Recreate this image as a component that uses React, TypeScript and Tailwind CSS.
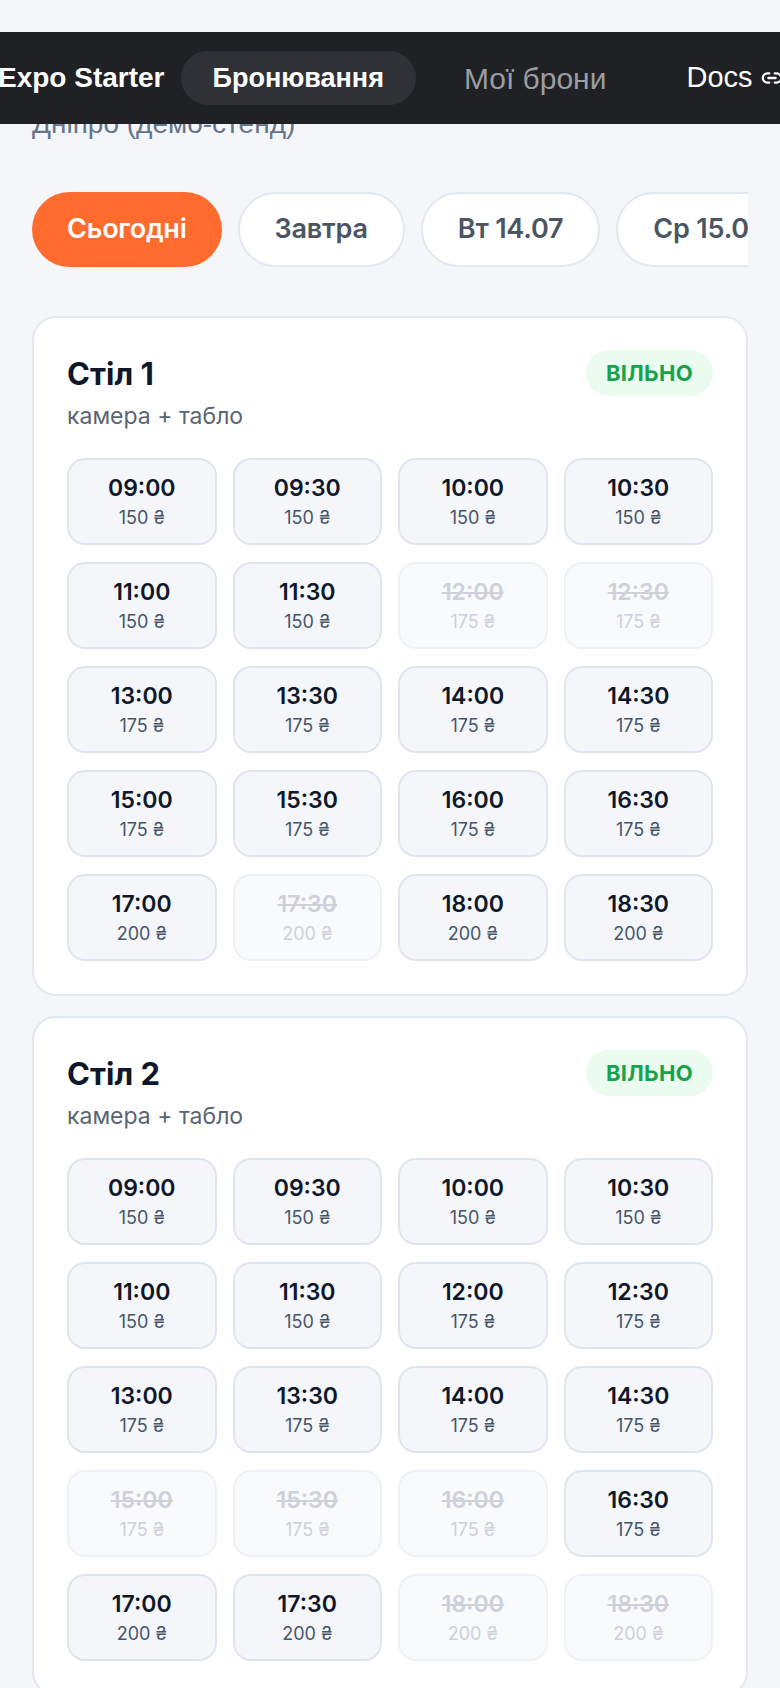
import React from "react";
import { Link2 } from "lucide-react";

type Slot = { t: string; p: number; off?: boolean };

const times = [
  "09:00","09:30","10:00","10:30","11:00","11:30","12:00","12:30",
  "13:00","13:30","14:00","14:30","15:00","15:30","16:00","16:30",
  "17:00","17:30","18:00","18:30",
];
const priceOf = (t: string) => {
  const h = parseInt(t.slice(0, 2), 10);
  if (h < 12) return 150;
  if (h < 17) return 175;
  return 200;
};
const mk = (off: string[]): Slot[] => times.map((t) => ({ t, p: priceOf(t), off: off.includes(t) }));

const tables = [
  { name: "Стіл 1", desc: "камера + табло", slots: mk(["12:00", "12:30", "17:30"]) },
  { name: "Стіл 2", desc: "камера + табло", slots: mk(["15:00", "15:30", "16:00", "18:00", "18:30"]) },
];

const chips = ["Сьогодні", "Завтра", "Вт 14.07", "Ср 15.07", "Чт 16.07"];

function SlotBtn({ s }: { s: Slot }) {
  return (
    <div
      className={
        "h-[87px] rounded-[18px] border-2 flex flex-col items-center justify-center gap-[5px] " +
        (s.off ? "bg-[#f9fafc] border-[#eef1f6]" : "bg-[#f4f6fa] border-[#dfe5ef]")
      }
    >
      <div
        className={
          "text-[23px] leading-[28px] font-semibold " +
          (s.off ? "text-[#cdd1da] line-through" : "text-[#0f172a]")
        }
      >
        {s.t}
      </div>
      <div className={"text-[18px] leading-[22px] " + (s.off ? "text-[#cdd1da]" : "text-[#475569]")}>
        {s.p} ₴
      </div>
    </div>
  );
}

export default function App() {
  return (
    <div
      className="relative min-h-[1688px] bg-[#f5f6fa] overflow-hidden"
      style={{ fontFamily: "Inter, 'Noto Sans', sans-serif" }}
    >
      {/* top nav overlay */}
      <div
        className="absolute left-0 right-0 top-[32px] h-[92px] bg-[#202124] z-10 flex items-center gap-4 pl-0 -ml-[2px] overflow-hidden whitespace-nowrap"
        style={{ fontFamily: "'Liberation Sans', Arial, sans-serif" }}
      >
        <span className="text-white text-[28px] font-bold">Expo Starter</span>
        <span className="h-[54px] px-8 rounded-full bg-[#2f3136] text-white text-[27px] font-bold flex items-center">
          Бронювання
        </span>
        <span className="h-[54px] px-8 rounded-full text-[#9b9da2] text-[30px] flex items-center">Мої брони</span>
        <span className="h-[54px] pl-8 rounded-full text-white text-[29px] flex items-center gap-2">
          Docs <Link2 size={22} strokeWidth={2.5} className="text-white" />
        </span>
      </div>

      <div className="px-8 pt-[108px] pb-10">
        <div
          className="text-[28px] leading-[32px] text-[#64748b]"
          style={{ fontFamily: "'Liberation Sans', Arial, sans-serif" }}
        >
          Дніпро (демо-стенд)
        </div>

        <div className="mt-[52px] flex gap-4 overflow-hidden">
          {chips.map((c, i) => (
            <div
              key={c}
              className={
                "shrink-0 h-[75px] px-[35px] rounded-full flex items-center text-[27px] font-semibold tracking-[-0.2px] " +
                (i === 0
                  ? "bg-[#ff6b2c] text-white"
                  : "bg-white border-2 border-[#e2e7f0] text-[#4b5563]")
              }
            >
              {c}
            </div>
          ))}
        </div>

        <div className="mt-[49px] flex flex-col gap-[20px]">
          {tables.map((tb) => (
            <div key={tb.name} className="bg-white border-2 border-[#e2e7f0] rounded-[24px] px-[33px] pt-[36px] pb-[33px]">
              <div className="flex items-start justify-between">
                <div>
                  <div className="text-[31px] leading-[40px] font-bold text-[#0f172a]">{tb.name}</div>
                  <div className="mt-[8px] text-[23px] leading-[28px] text-[#5b6472]">{tb.desc}</div>
                </div>
                <div className="-mt-[4px] h-[46px] px-5 rounded-full bg-[#eafbf0] text-[#16a34a] text-[22px] font-bold flex items-center tracking-[0.3px]">
                  ВІЛЬНО
                </div>
              </div>
              <div className="mt-[28px] grid grid-cols-4 gap-x-4 gap-y-[17px]">
                {tb.slots.map((s) => (
                  <SlotBtn key={s.t} s={s} />
                ))}
              </div>
            </div>
          ))}
        </div>
      </div>
    </div>
  );
}
